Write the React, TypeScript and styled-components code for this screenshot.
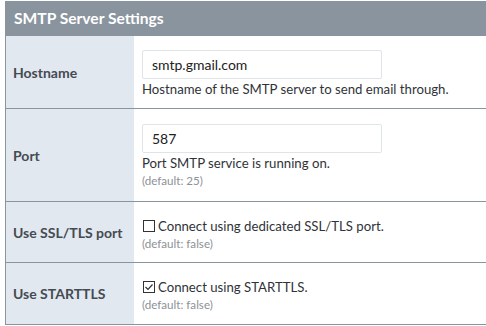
import styled, { createGlobalStyle } from 'styled-components';

const GlobalStyle = createGlobalStyle`
  body {
    margin: 0;
    background: #ffffff;
    font-family: Lato, 'Liberation Sans', sans-serif;
  }
`;

const Panel = styled.div`
  margin: 1px 0 0 5px;
  width: 481px;
  border-left: 1px solid #8a949e;
`;

const PanelTitle = styled.div`
  height: 34px;
  background: #8a949e;
  color: #ffffff;
  font-size: 15.6px;
  font-weight: 700;
  display: flex;
  align-items: center;
  padding-left: 8px;
  border-bottom: 1px solid #8a949e;
`;

const Row = styled.div<{ $height: number }>`
  display: grid;
  grid-template-columns: 128px 1fr;
  height: ${(p) => p.$height}px;
  border-bottom: 1px solid #8a949e;
`;

const Label = styled.div`
  background: #e2e8ef;
  display: flex;
  align-items: center;
  padding-left: 7px;
  font-size: 14px;
  font-weight: 700;
  color: #454b52;
`;

const Field = styled.div<{ $top: number }>`
  padding: ${(p) => p.$top}px 0 0 8px;
  display: flex;
  flex-direction: column;
  align-items: flex-start;
`;

const TextInput = styled.input`
  box-sizing: border-box;
  width: 240px;
  height: 29px;
  border: 1px solid #dfe4e9;
  border-radius: 2px;
  padding: 0 9px;
  font-family: inherit;
  font-size: 14px;
  color: #222;
  outline: none;
`;

const Help = styled.div`
  font-size: 13.2px;
  color: #2f3338;
  line-height: 18px;
  margin-top: 1px;
`;

const Default = styled.div`
  font-size: 11.6px;
  color: #8d9196;
  line-height: 16px;
  margin-top: 1px;
`;

const CheckLine = styled.label`
  display: flex;
  align-items: center;
  gap: 3px;
  font-size: 13.2px;
  color: #2f3338;
  line-height: 18px;
`;

const Box = styled.span`
  box-sizing: border-box;
  width: 12px;
  height: 12px;
  border: 1px solid #333;
  background: #fff;
  display: inline-flex;
  align-items: center;
  justify-content: center;
  margin-left: 1px;
`;

function Checkbox({ checked }: { checked: boolean }) {
  return (
    <Box>
      {checked && (
        <svg width="10" height="10" viewBox="0 0 10 10">
          <path d="M1.5 5 L4 7.5 L8.5 2.5" fill="none" stroke="#333" strokeWidth="1.2" />
        </svg>
      )}
    </Box>
  );
}

export default function App() {
  return (
    <>
      <GlobalStyle />
      <Panel>
        <PanelTitle>SMTP Server Settings</PanelTitle>
        <Row $height={72}>
          <Label>Hostname</Label>
          <Field $top={14}>
            <TextInput defaultValue="smtp.gmail.com" />
            <Help>Hostname of the SMTP server to send email through.</Help>
          </Field>
        </Row>
        <Row $height={92}>
          <Label>Port</Label>
          <Field $top={15}>
            <TextInput defaultValue="587" />
            <Help>Port SMTP service is running on.</Help>
            <Default>(default: 25)</Default>
          </Field>
        </Row>
        <Row $height={60}>
          <Label>Use SSL/TLS port</Label>
          <Field $top={15}>
            <CheckLine>
              <Checkbox checked={false} />
              Connect using dedicated SSL/TLS port.
            </CheckLine>
            <Default>(default: false)</Default>
          </Field>
        </Row>
        <Row $height={61}>
          <Label>Use STARTTLS</Label>
          <Field $top={15}>
            <CheckLine>
              <Checkbox checked={true} />
              Connect using STARTTLS.
            </CheckLine>
            <Default>(default: false)</Default>
          </Field>
        </Row>
      </Panel>
    </>
  );
}
